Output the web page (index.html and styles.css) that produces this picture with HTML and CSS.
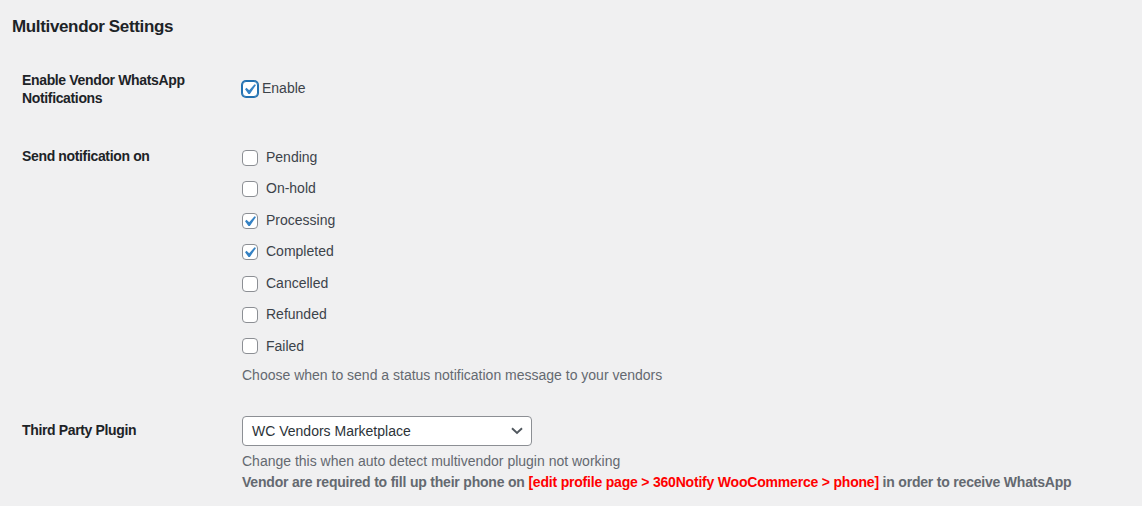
FILE: index.html
```html
<!DOCTYPE html>
<html>
<head>
<meta charset="utf-8">
<link rel="stylesheet" href="styles.css">
</head>
<body>
<div class="wrap">
  <h2 class="title">Multivendor Settings</h2>
  <table class="form-table">
    <tr>
      <th>Enable Vendor WhatsApp Notifications</th>
      <td>
        <label class="opt opt-tight">
          <span class="cb checked focus"><svg viewBox="0 0 20 20" width="21" height="21"><path d="M14.83 4.89l1.34.94-5.81 8.38H9.02L5.78 9.67l1.34-1.25 2.57 2.4z" fill="#3582c4"/></svg></span>
          <span>Enable</span>
        </label>
      </td>
    </tr>
    <tr>
      <th>Send notification on</th>
      <td>
        <div class="fieldset">
          <label class="opt"><span class="cb"></span><span>Pending</span></label>
          <label class="opt"><span class="cb"></span><span>On-hold</span></label>
          <label class="opt"><span class="cb checked"><svg viewBox="0 0 20 20" width="21" height="21"><path d="M14.83 4.89l1.34.94-5.81 8.38H9.02L5.78 9.67l1.34-1.25 2.57 2.4z" fill="#3582c4"/></svg></span><span>Processing</span></label>
          <label class="opt"><span class="cb checked"><svg viewBox="0 0 20 20" width="21" height="21"><path d="M14.83 4.89l1.34.94-5.81 8.38H9.02L5.78 9.67l1.34-1.25 2.57 2.4z" fill="#3582c4"/></svg></span><span>Completed</span></label>
          <label class="opt"><span class="cb"></span><span>Cancelled</span></label>
          <label class="opt"><span class="cb"></span><span>Refunded</span></label>
          <label class="opt"><span class="cb"></span><span>Failed</span></label>
        </div>
        <p class="description desc-tight">Choose when to send a status notification message to your vendors</p>
      </td>
    </tr>
    <tr>
      <th>Third Party Plugin</th>
      <td>
        <div class="select">
          <span>WC Vendors Marketplace</span>
          <svg class="chev" viewBox="0 0 12 8" width="12" height="8"><path d="M1 1.2l5 4.8 5-4.8" fill="none" stroke="#50575e" stroke-width="1.9"/></svg>
        </div>
        <p class="description desc-loose">Change this when auto detect multivendor plugin not working<br><strong>Vendor are required to fill up their phone on <span class="red">[edit profile page &gt; 360Notify WooCommerce &gt; phone]</span> in order to receive WhatsApp</strong></p>
      </td>
    </tr>
  </table>
</div>
</body>
</html>
```
FILE: styles.css
```css
html, body {
  margin: 0;
  padding: 0;
  background: #f0f0f1;
}
body {
  font-family: "Liberation Sans", Arial, sans-serif;
  font-size: 14px;
  color: #3c434a;
}
.wrap {
  padding: 0 12px;
}
.title {
  margin: 16px 0 13px;
  font-size: 17px;
  line-height: 22px;
  font-weight: 600;
  letter-spacing: -0.35px;
  color: #1d2327;
}
.form-table {
  border-collapse: collapse;
  border-spacing: 0;
}
.form-table th {
  width: 200px;
  padding: 20px 10px 20px 10px;
  text-align: left;
  vertical-align: top;
  font-weight: 600;
  font-size: 14px;
  line-height: 1.3;
  letter-spacing: -0.35px;
  color: #1d2327;
}
.form-table td {
  padding: 15px 10px;
  vertical-align: middle;
  line-height: 1.3;
}
.opt {
  display: flex;
  align-items: center;
  gap: 8px;
  line-height: 1.4;
  color: #3c434a;
}
.opt-tight {
  gap: 4px;
}
.fieldset {
  display: flex;
  flex-direction: column;
  align-items: flex-start;
}
.fieldset .opt {
  margin: 5.4px 0 6.5px;
}
.cb {
  width: 16px;
  height: 16px;
  box-sizing: border-box;
  border: 1px solid #8c8f94;
  border-radius: 4px;
  background: #fff;
  display: block;
  flex: none;
}
.cb svg {
  display: block;
  margin: -3px 0 0 -4px;
}
.cb.focus {
  border-color: #2271b1;
  box-shadow: 0 0 0 1px #2271b1;
}
.description {
  margin: 4px 0 0;
  font-size: 14px;
  line-height: 1.5;
  color: #646970;
}
.desc-tight {
  margin-top: 2px;
}
.desc-loose {
  margin-top: 5px;
}
.description strong {
  font-weight: 600;
  letter-spacing: -0.2px;
}
.red {
  color: #ff0000;
}
.select {
  width: 290px;
  height: 30px;
  box-sizing: border-box;
  border: 1px solid #8c8f94;
  border-radius: 4px;
  background: #fff;
  display: flex;
  align-items: center;
  justify-content: space-between;
  padding: 0 8px 0 9px;
  color: #2c3338;
  font-size: 14px;
}
.chev {
  display: block;
}
```
